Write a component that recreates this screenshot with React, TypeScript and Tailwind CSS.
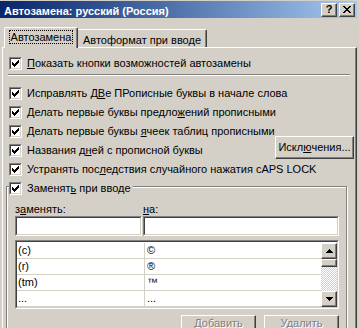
import React from "react";

function Check() {
  return (
    <svg width="7" height="7" viewBox="0 0 7 7" shapeRendering="crispEdges" className="block">
      <path
        d="M6 0h1v1h-1z M5 1h2v1h-2z M0 2h1v1h-1z M4 2h3v1h-3z M0 3h2v1h-2z M3 3h3v1h-3z M0 4h5v1h-5z M1 5h3v1h-3z M2 6h1v1h-1z"
        fill="#000"
      />
    </svg>
  );
}

function Checkbox() {
  return (
    <span className="flex h-[13px] w-[13px] shrink-0 border border-t-[#808080] border-l-[#808080] border-b-white border-r-white">
      <span className="flex flex-1 items-center justify-center border border-t-[#404040] border-l-[#404040] border-b-[#D4D0C8] border-r-[#D4D0C8] bg-white">
        <Check />
      </span>
    </span>
  );
}

function U({ children }: { children: React.ReactNode }) {
  return <span className="underline decoration-1 underline-offset-[1px]">{children}</span>;
}

function Row({ children, extra }: { children: React.ReactNode; extra?: React.ReactNode }) {
  return (
    <div className="flex h-[19px] items-center">
      <Checkbox />
      <span className="ml-[5px] whitespace-nowrap leading-[13px]">{children}</span>
      {extra}
    </div>
  );
}

function Sunken({ className, children }: { className: string; children?: React.ReactNode }) {
  return (
    <div className={"border border-t-[#808080] border-l-[#808080] border-b-white border-r-white " + className}>
      <div className="h-full border border-t-[#404040] border-l-[#404040] border-b-[#D4D0C8] border-r-[#D4D0C8] bg-white">
        {children}
      </div>
    </div>
  );
}

function Arrow({ up }: { up?: boolean }) {
  return (
    <svg width="7" height="4" viewBox="0 0 7 4" shapeRendering="crispEdges" className="block">
      {up ? (
        <path d="M3 0h1v1h-1z M2 1h3v1h-3z M1 2h5v1h-5z M0 3h7v1h-7z" fill="#000" />
      ) : (
        <path d="M0 0h7v1h-7z M1 1h5v1h-5z M2 2h3v1h-3z M3 3h1v1h-1z" fill="#000" />
      )}
    </svg>
  );
}

const raised =
  "border border-t-white border-l-white border-b-[#404040] border-r-[#404040] shadow-[inset_-1px_-1px_0_#808080] bg-[#D4D0C8]";

const rows = [
  ["(c)", "©"],
  ["(r)", "®"],
  ["(tm)", "™"],
  ["...", "..."],
];

export default function App() {
  return (
    <div className="flex h-[328px] w-[359px] flex-col overflow-hidden bg-[#D4D0C8] pt-[1px] font-['Liberation_Sans',Arial,sans-serif] text-[11px] leading-[13px] text-black">
      <div className="mr-[2px] h-px bg-white" />
      {/* title bar */}
      <div className="mr-[2px] flex h-[18px] items-center bg-linear-to-r from-[#0A246A] to-[#A6CAF0] pl-[4px] pr-[2px]">
        <span className="pt-[4px] text-[11px] font-bold leading-[13px] whitespace-nowrap text-white">
          Автозамена: русский (Россия)
        </span>
        <div className="ml-auto flex gap-[2px]">
          <div className={"flex h-[14px] w-[16px] items-center justify-center " + raised}>
            <span className="text-[11px] font-bold leading-[11px]">?</span>
          </div>
          <div className={"flex h-[14px] w-[16px] items-center justify-center " + raised}>
            <svg width="8" height="7" viewBox="0 0 8 7" shapeRendering="crispEdges" className="block">
              <path
                d="M0 0h2v1h-2z M6 0h2v1h-2z M1 1h2v1h-2z M5 1h2v1h-2z M2 2h4v1h-4z M3 3h2v1h-2z M2 4h4v1h-4z M1 5h2v1h-2z M5 5h2v1h-2z M0 6h2v1h-2z M6 6h2v1h-2z"
                fill="#000"
              />
            </svg>
          </div>
        </div>
      </div>

      {/* tabs */}
      <div className="mt-[9px] flex h-[20px] items-end pl-[4px]">
        <div className="relative z-10 -mb-px h-[21px] w-[74px] rounded-tl-[2px] rounded-tr-[2px] border-t border-l border-r border-t-white border-l-white border-r-[#404040] bg-[#D4D0C8] pl-[4px] pt-[2px] shadow-[inset_-1px_0_0_#808080]">
          <div className="flex h-[14px] w-[64px] items-center justify-center border border-dotted border-black whitespace-nowrap">
            Автозамена
          </div>
        </div>
        <div className="flex h-[18px] w-[129px] items-center justify-center rounded-tr-[2px] border-t border-r border-t-white border-r-[#404040] pt-[3px] whitespace-nowrap shadow-[inset_-1px_0_0_#808080]">
          Автоформат при вводе
        </div>
      </div>

      {/* panel */}
      <div className="mx-[2px] flex flex-1 flex-col border-t border-l border-r border-t-white border-l-white border-r-[#404040] pl-[6px] pt-[6px] shadow-[inset_-1px_0_0_#808080]">
        <Row>
          <U>П</U>оказать кнопки возможностей автозамены
        </Row>
        <div className="-ml-[1px] mt-[1px] h-[2px] w-[342px] border-t border-b border-t-[#808080] border-b-white" />

        <div className="mt-[8px] flex flex-col">
          <Row>
            Исправлять Д<U>В</U>е ПРописные буквы в начале слова
          </Row>
          <Row>
            Делать первые буквы предло<U>ж</U>ений прописными
          </Row>
          <Row>
            Делать первые буквы <U>я</U>чеек таблиц прописными
          </Row>
          <Row
            extra={
              <button
                type="button"
                className={
                  "ml-auto mr-[2px] -mt-[5px] flex h-[23px] w-[79px] self-start items-center justify-center whitespace-nowrap " +
                  raised
                }
              >
                Искл<U>ю</U>чения...
              </button>
            }
          >
            Названия д<U>н</U>ей с прописной буквы
          </Row>
          <Row>
            Устранять пос<U>л</U>едствия случайного нажатия cAPS LOCK
          </Row>
        </div>

        {/* group box */}
        <div className="-ml-[3px] mt-[7px] w-[341px] flex-1 border border-[#808080] shadow-[inset_1px_1px_0_#fff,1px_1px_0_#fff]">
          <div className="-mt-[8px] ml-[2px] flex h-[19px] w-fit items-center bg-[#D4D0C8] pr-[2px]">
            <Checkbox />
            <span className="ml-[5px] whitespace-nowrap">
              Заменят<U>ь</U> при вводе
            </span>
          </div>

          <div className="flex flex-col pl-[8px]">
            <div className="mt-[5px] flex h-[13px] gap-[1px]">
              <div className="w-[127px]">
                з<U>а</U>менять:
              </div>
              <div className="w-[196px]">
                <U>н</U>а:
              </div>
            </div>
            <div className="flex gap-[1px]">
              <Sunken className="h-[20px] w-[127px]" />
              <Sunken className="h-[20px] w-[196px]" />
            </div>

            <Sunken className="mt-[4px] h-[69px] w-[324px]">
              <div className="flex h-full">
                <div className="flex-1 pt-[1px]">
                  {rows.map(([a, b]) => (
                    <div key={a} className="flex h-[16px] border-b border-[#D4D0C8]">
                      <div className="flex w-[128px] items-center border-r border-[#D4D0C8] pl-[1px]">{a}</div>
                      <div className="flex flex-1 items-center pl-[2px]">{b}</div>
                    </div>
                  ))}
                </div>
                <div className="mt-[1px] flex h-[64px] w-[16px] flex-col">
                  <div className={"flex h-[16px] items-center justify-center " + raised}>
                    <Arrow up />
                  </div>
                  <div className={"h-[8px] " + raised} />
                  <div className="flex-1 bg-[repeating-conic-gradient(#D4D0C8_0%_25%,#ffffff_0%_50%)] bg-[length:2px_2px]" />
                  <div className={"flex h-[16px] items-center justify-center " + raised}>
                    <Arrow />
                  </div>
                </div>
              </div>
            </Sunken>

            <div className="mt-[6px] flex w-[324px] justify-end gap-[8px]">
              <div className={"flex h-[23px] w-[75px] justify-center pt-[1px] text-[#808080] [text-shadow:1px_1px_0_#fff] " + raised}>
                Добавить
              </div>
              <div className={"flex h-[23px] w-[75px] justify-center pt-[1px] text-[#808080] [text-shadow:1px_1px_0_#fff] " + raised}>
                Удалить
              </div>
            </div>
          </div>
        </div>
      </div>
    </div>
  );
}
